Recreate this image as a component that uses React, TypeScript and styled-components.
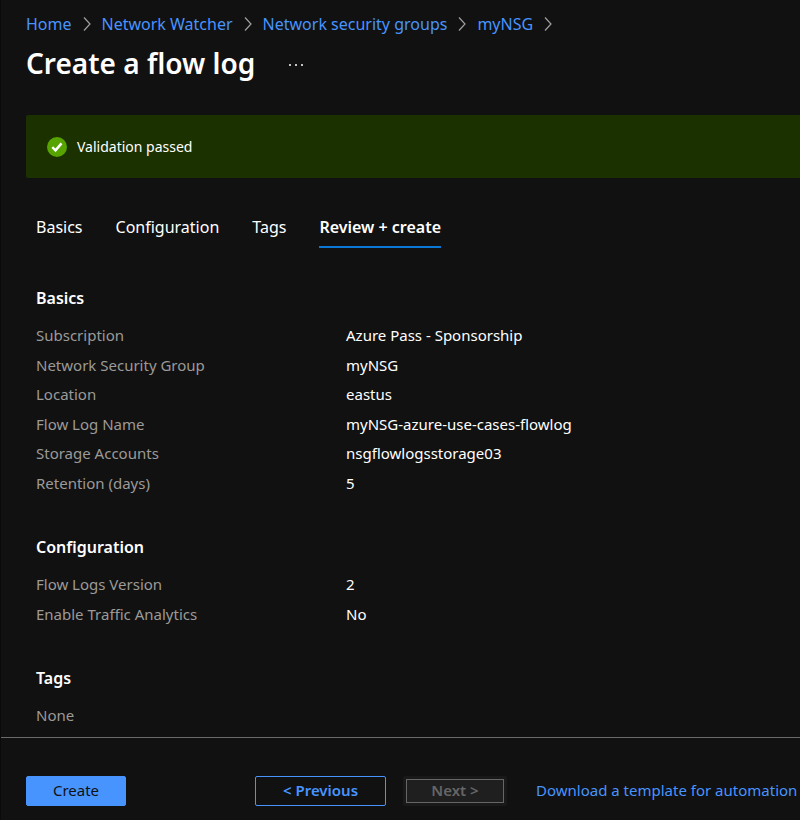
import React, { Fragment } from "react";
import styled, { createGlobalStyle, css } from "styled-components";

const GlobalStyle = createGlobalStyle`
  * { box-sizing: border-box; }
  body {
    margin: 0;
    background: #111111;
    color: #ffffff;
    font-family: "Noto Sans", "Open Sans", sans-serif;
    font-size: 15px;
    line-height: 20px;
  }
`;

const Blade = styled.div`
  display: flex;
  flex-direction: column;
  min-height: 100vh;
  border-left: 1px solid #0a0a0a;
  overflow-x: hidden;
`;

const Header = styled.header`
  padding: 12px 25px 0;
`;

const Breadcrumb = styled.nav`
  display: flex;
  align-items: center;
  font-size: 16px;
  line-height: 24px;
  white-space: nowrap;
`;

const Link = styled.a`
  color: #4894fe;
  text-decoration: none;
  white-space: nowrap;
`;

const Chevron = styled.svg`
  width: 8px;
  height: 14px;
  margin: 0 11px;
  fill: none;
  stroke: #a0a0a0;
  stroke-width: 1.2;
`;

const TitleRow = styled.div`
  display: flex;
  align-items: center;
  gap: 33px;
  padding-top: 7px;
`;

const Title = styled.h1`
  margin: 0;
  font-size: 28px;
  line-height: 40px;
  font-weight: 600;
`;

const MoreButton = styled.button`
  display: flex;
  padding: 8px 0 4px;
  border: 0;
  background: none;
  fill: #ffffff;
`;

const Banner = styled.div`
  display: flex;
  align-items: center;
  gap: 10px;
  height: 63px;
  margin: 32px 0 0 25px;
  padding-left: 21px;
  border-radius: 2px 0 0 2px;
  background: #1b3200;
  font-size: 14px;
`;

const Tabs = styled.div`
  display: flex;
  gap: 33px;
  padding: 37px 35px 0;
`;

const Tab = styled.button<{ $active?: boolean }>`
  padding: 0 0 7px;
  border: 0;
  border-bottom: 2px solid transparent;
  background: none;
  color: #ffffff;
  font: inherit;
  font-size: 16px;
  line-height: 24px;
  white-space: nowrap;
  ${(p) => p.$active && css`
    border-color: #0a78d4;
    font-weight: 600;
  `}
`;

const Summary = styled.main`
  padding: 38px 35px 7px;
`;

const Section = styled.section`
  & + & { padding-top: 37px; }
`;

const SectionTitle = styled.h2`
  margin: 0 0 11px;
  font-size: 16px;
  line-height: 24px;
  font-weight: 600;
`;

const Fields = styled.dl`
  display: grid;
  grid-template-columns: 310px 1fr;
  grid-auto-rows: 30px 29px;
  margin: 0;
  line-height: 29px;
`;

const Label = styled.dt`
  color: #9c9a98;
`;

const Value = styled.dd`
  margin: 0;
`;

const Empty = styled.p`
  margin: 0;
  line-height: 29px;
  color: #9c9a98;
`;

const Footer = styled.footer`
  display: flex;
  align-items: center;
  margin-top: auto;
  padding: 38px 0 14px 25px;
  border-top: 1px solid #6b6b6b;
`;

const Button = styled.button`
  flex: none;
  height: 30px;
  padding: 0 0 2px;
  border: 1px solid #4894fe;
  border-radius: 2px;
  font: inherit;
  line-height: 20px;
`;

const CreateButton = styled(Button)`
  width: 100px;
  margin-right: 129px;
  background: #4894fe;
  color: #111111;
`;

const PreviousButton = styled(Button)`
  width: 131px;
  margin-right: 17px;
  background: transparent;
  color: #4894fe;
  font-weight: 600;
`;

const NextButton = styled(Button)`
  width: 104px;
  margin-right: 29px;
  border: 3px solid #191919;
  background: #1f1f1f;
  box-shadow: inset 0 0 0 1px #666666;
  color: #666666;
  font-weight: 600;
`;

const TemplateLink = styled(Link)`
  padding-bottom: 2px;
`;

const trail = ["Home", "Network Watcher", "Network security groups", "myNSG"];

const tabs = ["Basics", "Configuration", "Tags", "Review + create"];

const sections = [
  {
    title: "Basics",
    fields: [
      ["Subscription", "Azure Pass - Sponsorship"],
      ["Network Security Group", "myNSG"],
      ["Location", "eastus"],
      ["Flow Log Name", "myNSG-azure-use-cases-flowlog"],
      ["Storage Accounts", "nsgflowlogsstorage03"],
      ["Retention (days)", "5"],
    ],
  },
  {
    title: "Configuration",
    fields: [
      ["Flow Logs Version", "2"],
      ["Enable Traffic Analytics", "No"],
    ],
  },
  { title: "Tags", fields: [] },
];

export default function App() {
  return (
    <Blade>
      <GlobalStyle />
      <Header>
        <Breadcrumb aria-label="Breadcrumb">
          {trail.map((name) => (
            <Fragment key={name}>
              <Link href="#">{name}</Link>
              <Chevron viewBox="0 0 8 14" aria-hidden="true">
                <path d="M1 .5 7 7 1 13.5" />
              </Chevron>
            </Fragment>
          ))}
        </Breadcrumb>
        <TitleRow>
          <Title>Create a flow log</Title>
          <MoreButton aria-label="More actions">
            <svg width="16" height="4" viewBox="0 0 16 4">
              <circle cx="2" cy="2" r="1" />
              <circle cx="8" cy="2" r="1" />
              <circle cx="14" cy="2" r="1" />
            </svg>
          </MoreButton>
        </TitleRow>
      </Header>
      <Banner role="status">
        <svg width="20" height="20" viewBox="0 0 20 20" aria-hidden="true">
          <circle cx="10" cy="10" r="10" fill="#57a300" />
          <path d="m5.3 10.2 3.2 3.2 6-7" fill="none" stroke="#fff" strokeWidth="2.4" />
        </svg>
        Validation passed
      </Banner>
      <Tabs role="tablist">
        {tabs.map((name, i) => (
          <Tab key={name} role="tab" aria-selected={i === 3} $active={i === 3}>
            {name}
          </Tab>
        ))}
      </Tabs>
      <Summary>
        {sections.map(({ title, fields }) => (
          <Section key={title}>
            <SectionTitle>{title}</SectionTitle>
            {fields.length ? (
              <Fields>
                {fields.map(([label, value]) => (
                  <Fragment key={label}>
                    <Label>{label}</Label>
                    <Value>{value}</Value>
                  </Fragment>
                ))}
              </Fields>
            ) : (
              <Empty>None</Empty>
            )}
          </Section>
        ))}
      </Summary>
      <Footer>
        <CreateButton>Create</CreateButton>
        <PreviousButton>&lt; Previous</PreviousButton>
        <NextButton disabled>Next &gt;</NextButton>
        <TemplateLink href="#">Download a template for automation</TemplateLink>
      </Footer>
    </Blade>
  );
}
